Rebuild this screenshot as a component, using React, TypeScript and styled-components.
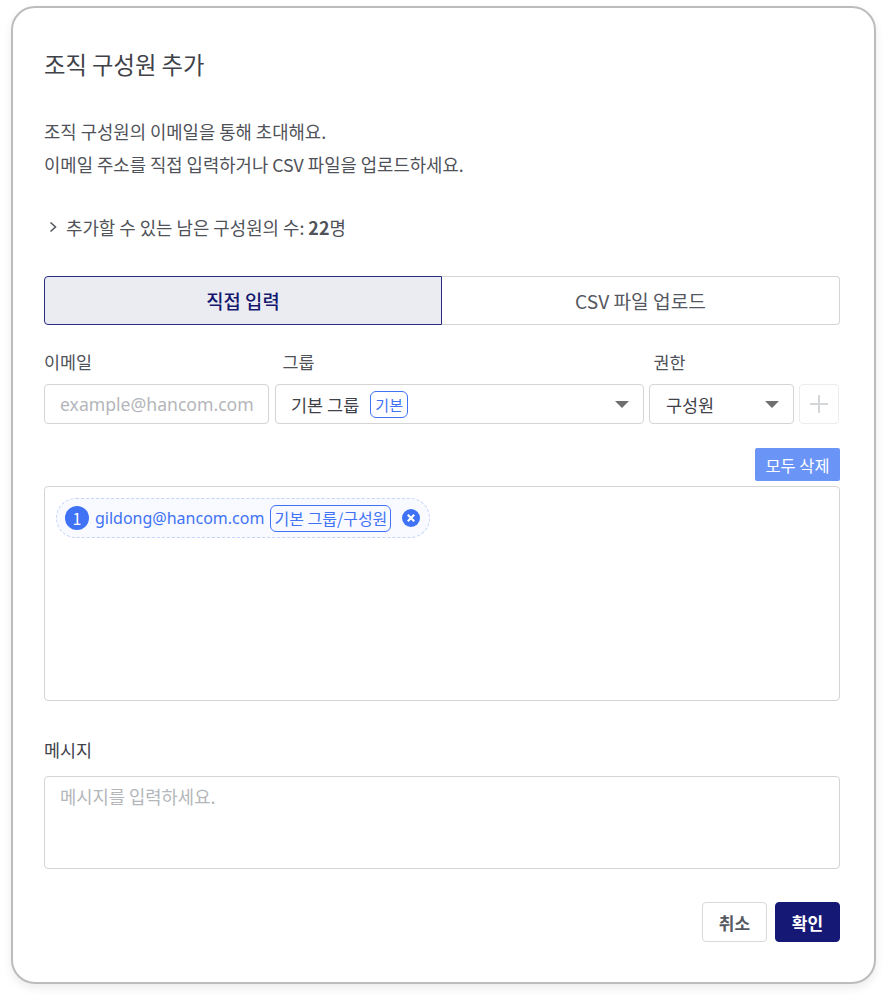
import React from "react";
import styled, { createGlobalStyle } from "styled-components";

const Global = createGlobalStyle`
  html, body { margin: 0; padding: 0; background: #fff; }
  * { box-sizing: border-box; }
  body { font-family: "Noto Sans CJK KR", "Noto Sans", sans-serif; color: #4f5259; }
`;

const Page = styled.div`
  width: 887px;
  height: 998px;
  padding: 6px 11px 15px 11px;
`;

const Modal = styled.div`
  width: 865px;
  height: 978px;
  background: #fff;
  border: 2px solid #bcbcbc;
  border-radius: 24px;
  box-shadow: 0 4px 10px rgba(0, 0, 0, 0.08);
  padding: 38px 34px 0 31px;
  display: flex;
  flex-direction: column;
`;

const Title = styled.h1`
  margin: 0;
  font-size: 23.3px;
  line-height: 36px;
  height: 36px;
  font-weight: 400;
  color: #3f4249;
`;

const Description = styled.p`
  margin: 33px 0 0;
  font-size: 17.75px;
  line-height: 33px;
  color: #4f5259;
`;

const Remaining = styled.div`
  margin-top: 30px;
  height: 32px;
  display: flex;
  align-items: center;
  gap: 8px;
  padding-left: 5px;
  font-size: 17.85px;
  color: #4f5259;
  white-space: nowrap;
  svg { flex: none; }
  b { font-weight: 700; }
`;

const Tabs = styled.div`
  margin-top: 33px;
  display: flex;
  height: 49px;
`;

const Tab = styled.div<{ $active?: boolean }>`
  flex: ${(p) => (p.$active ? "0 0 398px" : "1")};
  display: flex;
  align-items: center;
  justify-content: center;
  font-size: ${(p) => (p.$active ? "18.8px" : "19.2px")};
  font-weight: ${(p) => (p.$active ? 500 : 400)};
  color: ${(p) => (p.$active ? "#15176f" : "#55585f")};
  background: ${(p) => (p.$active ? "#ebecf2" : "#fff")};
  border: 1px solid ${(p) => (p.$active ? "#2a2c84" : "#d4d4d4")};
  border-left-width: ${(p) => (p.$active ? "1px" : "0")};
  border-radius: ${(p) => (p.$active ? "4px 0 0 4px" : "0 4px 4px 0")};
`;

const FieldGrid = styled.div`
  margin-top: 19px;
  display: grid;
  grid-template-columns: 225px 369.4px 144.6px 40px;
  column-gap: 5.5px;
  grid-template-rows: 40px 40px;
`;

const FieldLabel = styled.div<{ $indent?: number }>`
  font-size: 17.4px;
  line-height: 36px;
  color: #4f5259;
  padding-left: ${(p) => p.$indent ?? 0}px;
`;

const Input = styled.div`
  border: 1px solid #d4d4d4;
  border-radius: 4px;
  display: flex;
  align-items: center;
  padding-left: 15px;
  font-size: 17.6px;
  color: #b4b6ba;
  font-family: "Noto Sans", sans-serif;
  white-space: nowrap;
  overflow: hidden;
  height: 40px;
`;

const Select = styled.div`
  border: 1px solid #d4d4d4;
  border-radius: 4px;
  display: flex;
  align-items: center;
  padding: 0 14px 0 15.5px;
  font-size: 17.5px;
  color: #3f4249;
  height: 40px;
  gap: 11px;
`;

const Caret = styled.span`
  margin-left: auto;
  width: 0;
  height: 0;
  border-left: 7px solid transparent;
  border-right: 7px solid transparent;
  border-top: 7px solid #6f6f6f;
`;

const GroupTag = styled.span`
  border: 1px solid #3f72f5;
  border-radius: 6px;
  color: #3f72f5;
  font-size: 15px;
  line-height: 25px;
  height: 27px;
  padding: 0 4px;
`;

const AddButton = styled.div`
  border: 1px solid #ececec;
  border-radius: 4px;
  height: 40px;
  display: flex;
  align-items: center;
  justify-content: center;
`;

const DeleteRow = styled.div`
  margin-top: 24px;
  display: flex;
  justify-content: flex-end;
`;

const DeleteAll = styled.div`
  width: 85px;
  height: 33px;
  background: #6b94f7;
  color: #fff;
  border-radius: 2px;
  font-size: 16.4px;
  display: flex;
  align-items: center;
  justify-content: center;
`;

const ListBox = styled.div`
  margin-top: 5px;
  height: 215px;
  border: 1px solid #d4d4d4;
  border-radius: 4px;
  padding: 11px;
`;

const Chip = styled.div`
  display: inline-flex;
  align-items: center;
  height: 40px;
  width: 374px;
  padding: 0 8px;
  border: 1px dashed #c5d4fb;
  border-radius: 20px;
  background: #f8faff;
  color: #3f72f5;
  font-size: 16px;
`;

const ChipIndex = styled.span`
  width: 24px;
  height: 24px;
  border-radius: 50%;
  background: #3f72f5;
  color: #fff;
  font-size: 16px;
  display: flex;
  align-items: center;
  justify-content: center;
  flex: none;
`;

const ChipEmail = styled.span`
  margin-left: 6px;
  font-family: "Noto Sans", sans-serif;
  font-size: 16px;
  white-space: nowrap;
`;

const ChipTag = styled.span`
  margin-left: 6px;
  border: 1px solid #3f72f5;
  border-radius: 6px;
  font-size: 16px;
  line-height: 25px;
  height: 27px;
  padding: 0 3px;
  white-space: nowrap;
`;

const ChipClose = styled.span`
  margin-left: 11px;
  display: flex;
`;

const MessageLabel = styled.div`
  margin-top: 31px;
  font-size: 17.4px;
  line-height: 36px;
  color: #3f4249;
`;

const MessageBox = styled.div`
  margin-top: 8px;
  height: 93px;
  border: 1px solid #d4d4d4;
  border-radius: 4px;
  padding: 6px 15px;
  font-size: 17.7px;
  line-height: 26px;
  color: #b4b6ba;
`;

const Footer = styled.div`
  margin-top: 33px;
  display: flex;
  justify-content: flex-end;
  gap: 8px;
`;

const Button = styled.div<{ $primary?: boolean }>`
  width: 65px;
  height: 40px;
  border-radius: 4px;
  display: flex;
  align-items: center;
  justify-content: center;
  font-size: 17px;
  font-weight: 700;
  color: ${(p) => (p.$primary ? "#fff" : "#55585f")};
  background: ${(p) => (p.$primary ? "#151875" : "#fff")};
  border: 1px solid ${(p) => (p.$primary ? "#151875" : "#d9d9d9")};
`;

export default function App() {
  return (
    <>
      <Global />
      <Page>
        <Modal>
          <Title>조직 구성원 추가</Title>
          <Description>
            조직 구성원의 이메일을 통해 초대해요.
            <br />
            이메일 주소를 직접 입력하거나 CSV 파일을 업로드하세요.
          </Description>
          <Remaining>
            <svg width="9" height="12" viewBox="0 0 9 12" fill="none">
              <path d="M1.5 1.5 L6.5 6 L1.5 10.5" stroke="#55585f" strokeWidth="1.6" />
            </svg>
            <span>
              추가할 수 있는 남은 구성원의 수: <b>22</b>명
            </span>
          </Remaining>
          <Tabs>
            <Tab $active>직접 입력</Tab>
            <Tab>CSV 파일 업로드</Tab>
          </Tabs>
          <FieldGrid>
            <FieldLabel>이메일</FieldLabel>
            <FieldLabel $indent={8}>그룹</FieldLabel>
            <FieldLabel $indent={4}>권한</FieldLabel>
            <div />
            <Input>example@hancom.com</Input>
            <Select>
              기본 그룹
              <GroupTag>기본</GroupTag>
              <Caret />
            </Select>
            <Select>
              구성원
              <Caret />
            </Select>
            <AddButton>
              <svg width="20" height="20" viewBox="0 0 20 20" fill="none">
                <path d="M10 1 V19 M1 10 H19" stroke="#d4d6da" strokeWidth="2" />
              </svg>
            </AddButton>
          </FieldGrid>
          <DeleteRow>
            <DeleteAll>모두 삭제</DeleteAll>
          </DeleteRow>
          <ListBox>
            <Chip>
              <ChipIndex>1</ChipIndex>
              <ChipEmail>gildong@hancom.com</ChipEmail>
              <ChipTag>기본 그룹/구성원</ChipTag>
              <ChipClose>
                <svg width="18" height="18" viewBox="0 0 18 18">
                  <circle cx="9" cy="9" r="9" fill="#3f72f5" />
                  <path d="M5.8 5.8 L12.2 12.2 M12.2 5.8 L5.8 12.2" stroke="#fff" strokeWidth="2.2" />
                </svg>
              </ChipClose>
            </Chip>
          </ListBox>
          <MessageLabel>메시지</MessageLabel>
          <MessageBox>메시지를 입력하세요.</MessageBox>
          <Footer>
            <Button>취소</Button>
            <Button $primary>확인</Button>
          </Footer>
        </Modal>
      </Page>
    </>
  );
}
